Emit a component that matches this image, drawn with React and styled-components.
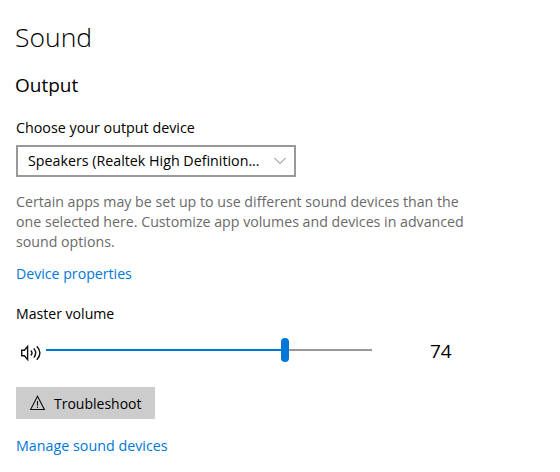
import { useState } from 'react';
import styled, { createGlobalStyle } from 'styled-components';

export default function App() {
  const [volume] = useState(74);

  return (
    <>
      <GlobalStyle />
      <Page>
        <Title>Sound</Title>
        <Subtitle>Output</Subtitle>
        <Label size="14.3px">Choose your output device</Label>
        <Select>
          <SelectText>Speakers (Realtek High Definition...</SelectText>
          <svg width="12" height="8" viewBox="0 0 12 8" fill="none">
            <path d="M0.5 1L6 6.5L11.5 1" stroke="#767676" strokeWidth="1" />
          </svg>
        </Select>
        <Description>
          Certain apps may be set up to use different sound devices than the<br />
          one selected here. Customize app volumes and devices in advanced<br />
          sound options.
        </Description>
        <Link href="#">Device properties</Link>
        <VolumeLabel size="14.1px">Master volume</VolumeLabel>
        <VolumeRow>
          <SpeakerIcon />
          <Track>
            <Fill style={{ width: `${volume * 3.23}px` }} />
            <Thumb />
            <Rest />
          </Track>
          <Value>{volume}</Value>
        </VolumeRow>
        <Button>
          <WarningIcon />
          <ButtonText>Troubleshoot</ButtonText>
        </Button>
        <ManageLink href="#">Manage sound devices</ManageLink>
      </Page>
    </>
  );
}

function SpeakerIcon() {
  return (
    <SpeakerSvg width="22" height="18" viewBox="0 0 22 18" fill="none" stroke="#111" strokeWidth="1.4">
      <path d="M1.7 6.2H4.4L7.6 2.4V15.6L4.4 11.8H1.7Z" />
      <path d="M10.8 6.5Q13.2 9 10.8 11.5" />
      <path d="M13.8 4.4Q17.6 9 13.8 13.6" />
      <path d="M16.8 2.2Q23 9 16.8 15.8" />
    </SpeakerSvg>
  );
}

function WarningIcon() {
  return (
    <svg width="16" height="16" viewBox="0 0 16 16" fill="none" stroke="#111" strokeWidth="1.1">
      <path d="M7.5 1.2L14.4 14.5H0.6Z" />
      <path d="M7.5 6V10.8M7.5 11.8V13" />
    </svg>
  );
}

const GlobalStyle = createGlobalStyle`
  body {
    margin: 0;
    background: #fff;
    color: #000;
    font-family: 'Open Sans', 'Noto Sans', sans-serif;
    font-size: 14px;
    line-height: 20px;
  }
`;

const Page = styled.main`
  display: flex;
  flex-direction: column;
  align-items: flex-start;
  box-sizing: border-box;
  width: 560px;
  height: 472px;
  padding: 19px 0 0 16px;
`;

const Title = styled.h1`
  margin: 0 0 0 -1px;
  font-size: 26.5px;
  font-weight: 300;
  line-height: 36px;
`;

const Subtitle = styled.h2`
  margin: 18px 0 0 -1px;
  font-size: 19px;
  font-weight: 400;
  line-height: 24px;
`;

const Label = styled.div`
  margin-top: 21px;
  font-size: ${props => props.size};
  white-space: nowrap;
`;

const Select = styled.div`
  display: flex;
  align-items: center;
  justify-content: space-between;
  box-sizing: border-box;
  width: 280px;
  height: 32px;
  margin-top: 7px;
  padding: 0 8px 0 10px;
  border: 2px solid #999;
`;

const SelectText = styled.span`
  font-size: 14.25px;
  white-space: nowrap;
`;

const Description = styled.p`
  margin: 15px 0 0;
  color: #6a6a6a;
  font-size: 14.2px;
  white-space: nowrap;
`;

const Link = styled.a`
  margin-top: 12px;
  color: #0078d7;
  font-size: 14.15px;
  text-decoration: none;
`;

const VolumeLabel = styled(Label)`
  margin-top: 20px;
`;

const VolumeRow = styled.div`
  display: flex;
  align-items: center;
  height: 24px;
  margin-top: 14px;
`;

const SpeakerSvg = styled.svg`
  margin: 5px 4px 0;
`;

const Track = styled.div`
  display: flex;
  align-items: center;
  width: 326px;
`;

const Fill = styled.div`
  flex-shrink: 0;
  height: 2px;
  background: #0078d7;
`;

const Thumb = styled.div`
  flex-shrink: 0;
  width: 8px;
  height: 24px;
  margin-left: -4px;
  border-radius: 4px;
  background: #0078d7;
`;

const Rest = styled.div`
  flex: 1;
  height: 2px;
  background: #999;
`;

const Value = styled.div`
  margin-left: 58px;
  padding-top: 2px;
  font-size: 19px;
  line-height: 24px;
`;

const Button = styled.button`
  display: flex;
  align-items: center;
  width: 139px;
  height: 32px;
  margin-top: 25px;
  padding: 0 0 0 14px;
  border: none;
  background: #ccc;
  color: #000;
  font: inherit;
`;

const ButtonText = styled.span`
  margin-left: 8px;
  padding-top: 2px;
`;

const ManageLink = styled(Link)`
  margin-top: 17px;
  font-size: 14.3px;
`;
